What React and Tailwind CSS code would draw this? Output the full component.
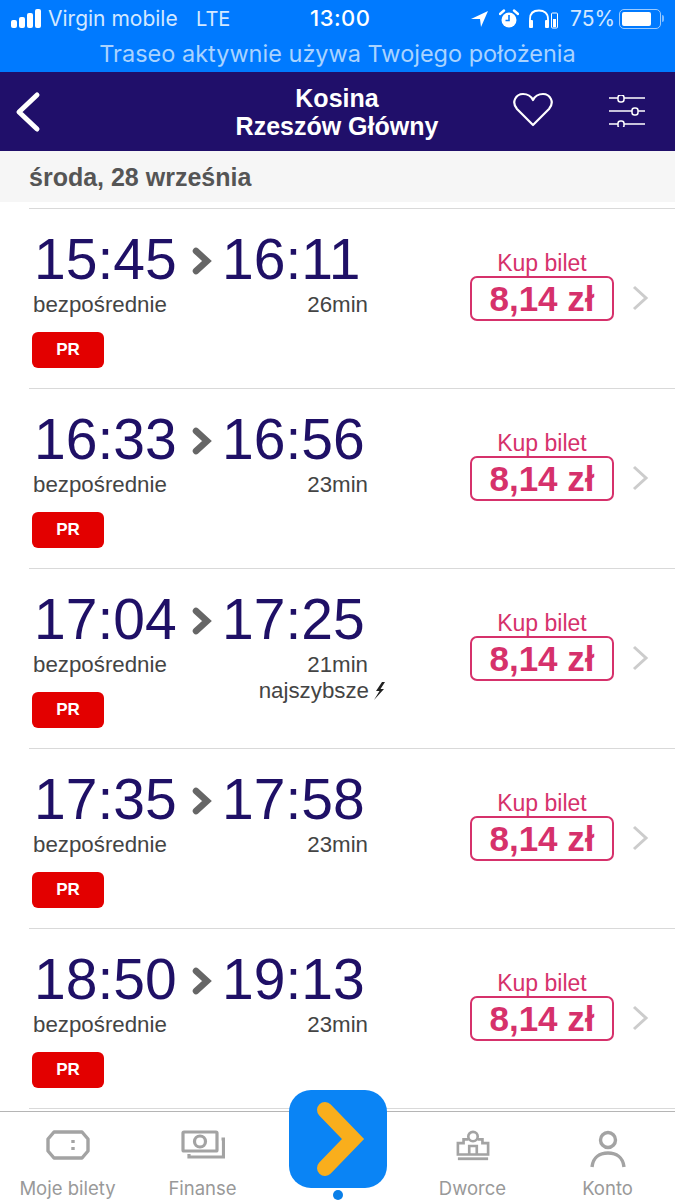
import React from 'react';

const sans = "font-['Liberation_Sans',Arial,sans-serif]";
const ui = "font-['Inter','Liberation_Sans',sans-serif]";

const connections = [
  { from: '15:45', to: '16:11', duration: '26min' },
  { from: '16:33', to: '16:56', duration: '23min' },
  { from: '17:04', to: '17:25', duration: '21min', fastest: true },
  { from: '17:35', to: '17:58', duration: '23min' },
  { from: '18:50', to: '19:13', duration: '23min' },
];

const StatusBar = () => (
  <div className={`h-[36px] pt-[1px] flex items-center pl-[11px] text-white text-[21px] whitespace-nowrap ${ui}`}>
    <svg width="30" height="20" viewBox="0 0 30 20" fill="#fff" className="shrink-0">
      <rect x="0" y="11" width="6" height="8" rx="2" />
      <rect x="8" y="8" width="6" height="11" rx="2" />
      <rect x="16" y="4" width="6" height="15" rx="2" />
      <rect x="24" y="0" width="6" height="19" rx="2" />
    </svg>
    <span className="ml-[7px] w-[148px] shrink-0 text-[#d3e8ff]">Virgin mobile</span>
    <span className="text-[20px] w-[114px] shrink-0 text-[#d3e8ff]">LTE</span>
    <span className="w-[161px] shrink-0 text-[22px] font-medium tracking-[0.5px]">13:00</span>
    <svg width="18" height="18" viewBox="0 0 18 18" fill="#fff" className="shrink-0">
      <path d="M0 9 L17 1 L10 17 L9 9 Z" />
    </svg>
    <svg width="20" height="20" viewBox="0 0 20 20" className="ml-[10px] shrink-0">
      <circle cx="10" cy="11" r="7.5" fill="#fff" />
      <path d="M10 6 V11.5 H6.5" stroke="#007aff" strokeWidth="1.6" fill="none" />
      <path d="M1 5 L5 1.5 M19 5 L15 1.5" stroke="#fff" strokeWidth="2.4" strokeLinecap="round" />
    </svg>
    <svg width="30" height="20" viewBox="0 0 30 20" fill="none" className="ml-[9px] shrink-0">
      <path d="M2 17 V10 C2 4 6 1.5 11 1.5 C16 1.5 20 4 20 10 V17" stroke="#fff" strokeWidth="1.8" />
      <rect x="1" y="11" width="4" height="8" rx="1" fill="#fff" />
      <rect x="17" y="11" width="4" height="8" rx="1" fill="#fff" />
      <rect x="23.5" y="4" width="6" height="15" rx="1" stroke="#fff" strokeWidth="1" />
      <rect x="25" y="10" width="3" height="8" fill="#fff" />
    </svg>
    <span className="ml-[12px] w-[49px] shrink-0 text-[#d3e8ff]">75%</span>
    <div className="w-[42px] h-[20px] rounded-[5px] border border-[#9ccbff] p-[2px] shrink-0">
      <div className="h-full w-[29px] bg-white rounded-[2px]" />
    </div>
    <div className="w-[2px] h-[7px] ml-[1px] bg-[#7fbcff] rounded-r-sm shrink-0" />
  </div>
);

const Header = () => (
  <div className="h-[79px] bg-[#200f6a] flex items-center shrink-0">
    <svg width="30" height="42" viewBox="0 0 30 42" fill="none" className="ml-[13px] shrink-0">
      <path d="M24 4 L6 21 L24 38" stroke="#fff" strokeWidth="5" strokeLinecap="round" strokeLinejoin="round" />
    </svg>
    <div className={`ml-[169px] w-[250px] shrink-0 text-center text-white text-[25px] leading-[28px] font-bold ${sans}`}>
      <div>Kosina</div>
      <div>Rzeszów Główny</div>
    </div>
    <svg width="42" height="36" viewBox="0 0 42 36" fill="none" className="ml-[50px] -mt-[3px] shrink-0">
      <path d="M21 33 L5 17 C-1 10 4 2 11 2 C15 2 19 4 21 8 C23 4 27 2 31 2 C38 2 43 10 37 17 Z" stroke="#fff" strokeWidth="2.2" strokeLinejoin="round" />
    </svg>
    <svg width="38" height="32" viewBox="0 0 38 32" fill="none" stroke="#fff" strokeWidth="1.5" className="ml-[54px] -mt-[2px] shrink-0">
      <path d="M1 3 H10 M16 3 H37 M1 16 H24 M30 16 H37 M1 29 H10 M16 29 H37" />
      <rect x="10" y="0" width="6" height="7" rx="2.5" />
      <rect x="24" y="13" width="6" height="7" rx="2.5" />
      <rect x="10" y="26" width="6" height="7" rx="2.5" />
    </svg>
  </div>
);

const ConnectionRow = ({ from, to, duration, fastest }) => (
  <div className={`h-[180px] ml-[29px] border-t border-[#d9d9d9] flex ${sans}`}>
    <div className="w-[357px] pt-[22px] pl-[4px] shrink-0">
      <div className="flex items-center h-[56px] text-[57px] leading-[56px] text-[#1f1066]">
        <span className="w-[157px] pl-[1px]">{from}</span>
        <svg width="22" height="28" viewBox="0 0 22 28" fill="none" className="ml-[1px] mt-[3px] shrink-0">
          <path d="M5 4 L16 14 L5 24" stroke="#666" strokeWidth="6.5" strokeLinecap="round" strokeLinejoin="miter" />
        </svg>
        <span className="ml-[9px]">{to}</span>
      </div>
      <div className="flex justify-between mt-[6px] text-[22.3px] leading-[24px] text-[#444]">
        <div>
          <div>bezpośrednie</div>
          <div className="mt-[15px] -ml-[1px] w-[72px] h-[36px] rounded-[6px] bg-[#e30000] text-white text-[17px] font-bold flex items-center justify-center">PR</div>
        </div>
        <div className="text-right pr-[18px]">
          <div>{duration}</div>
          {fastest && (
            <div className="flex items-center justify-end -mr-[18px] mt-[2px]">
              najszybsze
              <svg width="13" height="20" viewBox="0 0 13 20" fill="#222" className="ml-[4px] shrink-0">
                <path d="M9 1 L3 10 L6.5 10 L1 19 L11 8 L7.5 8 L12 1 Z" />
              </svg>
            </div>
          )}
        </div>
      </div>
    </div>
    <div className="ml-[84px] pt-[41px] w-[144px] shrink-0 text-center text-[#d6316b]">
      <div className="text-[23px] leading-[26px]">Kup bilet</div>
      <div className="h-[45px] pt-[2px] border-2 border-[#d6316b] rounded-[7px] flex items-center justify-center text-[35px] font-bold">8,14 zł</div>
    </div>
    <svg width="18" height="26" viewBox="0 0 18 26" fill="none" className="ml-[17px] mt-[76px] shrink-0">
      <path d="M3 2 L15 13 L3 24" stroke="#cccccc" strokeWidth="3" strokeLinejoin="miter" />
    </svg>
  </div>
);

const TicketIcon = () => (
  <svg width="44" height="30" viewBox="0 0 44 30" fill="none" stroke="#a3a3a3" strokeWidth="3.4">
    <path d="M8 2 H36 L42 9 V21 L36 28 H8 L2 21 V9 Z" strokeLinejoin="round" />
    <path d="M27 10 V13 M27 17 V20" />
  </svg>
);

const MoneyIcon = () => (
  <svg width="44" height="30" viewBox="0 0 44 30" fill="none" stroke="#a3a3a3" strokeWidth="3.2">
    <rect x="2" y="2" width="34" height="19" rx="1" />
    <circle cx="19" cy="11.5" r="5.5" />
    <path d="M40.5 9 H42.5 V27 H8 V24" />
  </svg>
);

const StationIcon = () => (
  <svg width="34" height="32" viewBox="0 0 36 32" fill="none" stroke="#a3a3a3" strokeWidth="2.8">
    <circle cx="18" cy="6" r="5" />
    <path d="M13 9 H8 V13 H2 V25 H34 V13 H28 V9 H23" />
    <path d="M14 25 V16 H22 V25" />
    <path d="M2 29.5 H34" strokeWidth="3" />
  </svg>
);

const UserIcon = () => (
  <svg width="36" height="38" viewBox="0 0 36 38" fill="none" stroke="#a3a3a3" strokeWidth="3.4">
    <circle cx="18" cy="10" r="7.5" />
    <path d="M2 37 C3 27 10 23 18 23 C26 23 33 27 34 37" />
  </svg>
);

const FooterItem = ({ icon, label }) => (
  <div className="flex flex-col items-center h-full">
    <div className="h-[54px] pt-[18px] flex items-start justify-center">{icon}</div>
    <div className={`mt-[12px] text-[18.5px] leading-[20px] text-[#999] ${ui}`}>{label}</div>
  </div>
);

const Footer = () => (
  <div className="relative h-[89px] shrink-0 bg-white border-t border-[#b5b5b5] grid grid-cols-5">
    <FooterItem icon={<TicketIcon />} label="Moje bilety" />
    <FooterItem icon={<MoneyIcon />} label="Finanse" />
    <div />
    <FooterItem icon={<StationIcon />} label="Dworce" />
    <FooterItem icon={<UserIcon />} label="Konto" />
    <div className="absolute left-[289px] -top-[22px] w-[98px] h-[98px] rounded-[22px] bg-[#0a84f5] flex items-center justify-center">
      <svg width="60" height="86" viewBox="0 0 60 86" fill="none" className="ml-[6px]">
        <path d="M14 14 L42 43 L14 72" stroke="#f9ae1c" strokeWidth="16" strokeLinecap="round" strokeLinejoin="miter" />
      </svg>
    </div>
    <div className="absolute left-[333px] top-[78px] w-[10px] h-[10px] rounded-full bg-[#0a7fe8]" />
  </div>
);

export default function App() {
  return (
    <div className="w-[675px] h-[1200px] flex flex-col overflow-hidden bg-white">
      <div className="h-[72px] bg-[#007aff] shrink-0">
        <StatusBar />
        <div className={`h-[36px] flex items-center justify-center text-[23.5px] text-[#a9d3ff] ${ui}`}>
          Traseo aktywnie używa Twojego położenia
        </div>
      </div>
      <Header />
      <div className={`h-[51px] pt-[3px] bg-[#f6f6f6] flex items-center pl-[29px] text-[25px] font-bold text-[#555] shrink-0 ${sans}`}>
        środa, 28 września
      </div>
      <div className="flex-1 pt-[6px]">
        {connections.map((c) => (
          <ConnectionRow key={c.from} {...c} />
        ))}
        <div className="ml-[29px] border-t border-[#d9d9d9]" />
      </div>
      <Footer />
    </div>
  );
}
